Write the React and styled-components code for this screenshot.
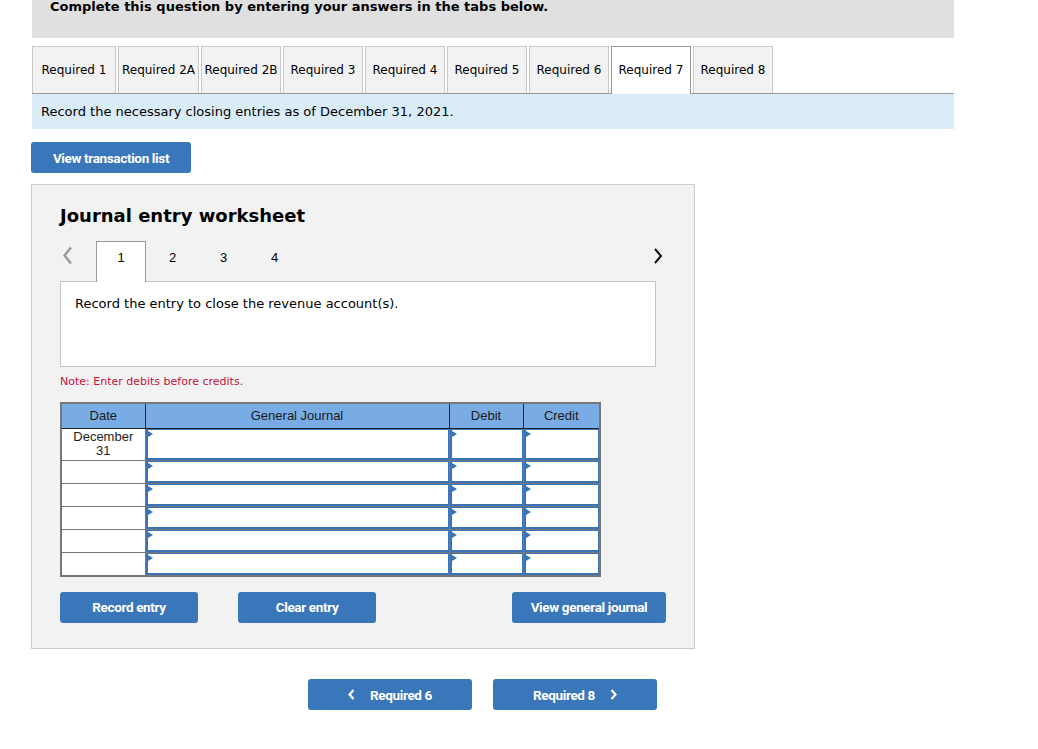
import React from "react";
import styled, { createGlobalStyle } from "styled-components";

const Global = createGlobalStyle`
  html, body { margin: 0; padding: 0; background: #fff; }
  body { font-family: "DejaVu Sans", Verdana, sans-serif; color: #000; }
  * { box-sizing: border-box; }
`;

const Page = styled.div`
  width: 1038px;
  padding-left: 32px;
`;

const Banner = styled.div`
  width: 922px;
  height: 38px;
  background: #e0e0e0;
  padding: 0 18px;
  font-weight: bold;
  font-size: 13px;
  line-height: 14px;
`;

const Tabs = styled.div`
  width: 922px;
  margin-top: 8px;
  display: flex;
  gap: 2px;
  border-bottom: 1px solid #999;
`;

const Tab = styled.div`
  width: ${(p) => p.$w}px;
  display: flex;
  align-items: center;
  justify-content: center;
  white-space: nowrap;
  font-size: 12px;
  background: ${(p) => (p.$active ? "#fff" : "#f2f2f2")};
  border: 1px solid ${(p) => (p.$active ? "#999" : "#c9c9c9")};
  border-bottom: none;
  margin-bottom: ${(p) => (p.$active ? "-1px" : "0")};
  height: ${(p) => (p.$active ? "48px" : "47px")};
  padding-bottom: ${(p) => (p.$active ? "1px" : "0")};
`;

const Info = styled.div`
  width: 922px;
  height: 35px;
  background: #dbecf9;
  padding-left: 9px;
  display: flex;
  align-items: center;
  font-size: 13px;
`;

const Button = styled.button`
  border: none;
  border-radius: 3px;
  background: #3a76ba;
  color: #fff;
  font-family: Roboto, "Liberation Sans", Arial, sans-serif;
  font-weight: bold;
  font-size: 13.5px;
  letter-spacing: -0.35px;
  height: 31px;
  width: ${(p) => p.$w}px;
  padding: 0;
  display: flex;
  align-items: center;
  justify-content: center;
  gap: 15px;
  cursor: pointer;
`;

const TopButton = styled(Button)`
  margin-top: 13px;
  margin-left: -1px;
`;

const Panel = styled.div`
  width: 664px;
  height: 465px;
  margin-top: 11px;
  margin-left: -1px;
  background: #f2f2f2;
  border: 1px solid #ccc;
  padding: 19px 28px 0 28px;
`;

const Title = styled.h2`
  margin: 0;
  font-size: 18px;
  font-weight: bold;
  line-height: 24px;
`;

const Pager = styled.div`
  margin-top: 12px;
  width: 603px;
  display: flex;
  align-items: flex-end;
  position: relative;
  z-index: 1;
`;

const Chevron = styled.div`
  width: 36px;
  height: 41px;
  display: flex;
  align-items: center;
  justify-content: ${(p) => (p.$right ? "flex-end" : "flex-start")};
  padding: ${(p) => (p.$right ? "0 0 10px 0" : "0 0 10px 2px")};
  margin-left: ${(p) => (p.$right ? "auto" : "0")};
`;

const PageNum = styled.div`
  width: ${(p) => (p.$active ? 50 : 51)}px;
  height: 41px;
  margin-bottom: -1px;
  display: flex;
  justify-content: center;
  padding-top: 8px;
  font-family: "Liberation Sans", Arial, sans-serif;
  font-size: 13px;
  background: ${(p) => (p.$active ? "#fff" : "transparent")};
  border: 1px solid ${(p) => (p.$active ? "#999" : "transparent")};
  border-bottom: none;
  margin-right: ${(p) => (p.$active ? 1 : 0)}px;
`;

const Prompt = styled.div`
  width: 596px;
  height: 86px;
  background: #fff;
  border: 1px solid #c4c4c4;
  padding: 14px 14px;
  font-size: 13px;
`;

const Note = styled.div`
  margin-top: 8px;
  font-size: 11px;
  color: #c2123e;
`;

const Table = styled.table`
  margin-top: 14px;
  border-collapse: collapse;
  border: 2px solid #777;
  font-family: "Liberation Sans", Arial, sans-serif;
  font-size: 13px;
  table-layout: fixed;
  width: 539px;
`;

const Th = styled.th`
  background: #79ace4;
  color: #1a1a1a;
  font-weight: normal;
  height: 25px;
  padding: 0;
  border: 1px solid #777;
  border-bottom: 1px solid #222;
  border-right: 1px solid ${(p) => (p.$last ? "#777" : "#222")};
  width: ${(p) => p.$w}px;
`;

const Tr = styled.tr`
  height: ${(p) => (p.$tall ? 32 : 23)}px;
`;

const DateCell = styled.td`
  background: #fff;
  border: 1px solid #777;
  text-align: center;
  vertical-align: top;
  padding: 1px 0 0 0;
  line-height: 14px;
  color: #222;
`;

const InputCell = styled.td`
  border: 1px solid #777;
  padding: 0;
`;

const Field = styled.div`
  position: relative;
  height: ${(p) => (p.$tall ? 31 : 22)}px;
  background: #fff;
  border: 1px solid #3c73b6;
  border-width: 1px 1px 2px 2px;
  &::before {
    content: "";
    position: absolute;
    left: 0;
    top: 1px;
    border-left: 5px solid #3c73b6;
    border-top: 3px solid transparent;
    border-bottom: 3px solid transparent;
  }
`;

const Actions = styled.div`
  margin-top: 15px;
  width: 606px;
  display: flex;
  gap: 40px;
`;

const Spacer = styled.div`
  flex: 1;
`;

const Nav = styled.div`
  margin-top: 30px;
  margin-left: 276px;
  display: flex;
  gap: 21px;
`;

const ChevLeft = () => (
  <svg width="11" height="19" viewBox="0 0 11 19">
    <path d="M9 1.5 L2.5 9.5 L9 17.5" fill="none" stroke="#999" strokeWidth="2.4" />
  </svg>
);
const ChevRight = () => (
  <svg width="10" height="18" viewBox="0 0 10 18">
    <path d="M2 2 L8 9 L2 16" fill="none" stroke="#111" strokeWidth="2" />
  </svg>
);
const SmallChev = ({ dir }) => (
  <svg width="7" height="11" viewBox="0 0 7 11">
    <path
      d={dir === "left" ? "M5.5 1 L1.5 5.5 L5.5 10" : "M1.5 1 L5.5 5.5 L1.5 10"}
      fill="none"
      stroke="#fff"
      strokeWidth="2.2"
    />
  </svg>
);

const tabs = [
  ["Required 1", 84],
  ["Required 2A", 81],
  ["Required 2B", 80],
  ["Required 3", 80],
  ["Required 4", 80],
  ["Required 5", 80],
  ["Required 6", 80],
  ["Required 7", 80],
  ["Required 8", 80],
];

export default function App() {
  const rows = [0, 1, 2, 3, 4, 5];
  return (
    <Page>
      <Global />
      <Banner>Complete this question by entering your answers in the tabs below.</Banner>
      <Tabs>
        {tabs.map(([t, w]) => (
          <Tab key={t} $w={w} $active={t === "Required 7"}>
            {t}
          </Tab>
        ))}
      </Tabs>
      <Info>Record the necessary closing entries as of December 31, 2021.</Info>
      <TopButton $w={160}>View transaction list</TopButton>
      <Panel>
        <Title>Journal entry worksheet</Title>
        <Pager>
          <Chevron>
            <ChevLeft />
          </Chevron>
          <PageNum $active>1</PageNum>
          <PageNum>2</PageNum>
          <PageNum>3</PageNum>
          <PageNum>4</PageNum>
          <Chevron $right>
            <ChevRight />
          </Chevron>
        </Pager>
        <Prompt>Record the entry to close the revenue account(s).</Prompt>
        <Note>Note: Enter debits before credits.</Note>
        <Table>
          <thead>
            <tr>
              <Th $w={84}>Date</Th>
              <Th $w={304}>General Journal</Th>
              <Th $w={74}>Debit</Th>
              <Th $w={77} $last>Credit</Th>
            </tr>
          </thead>
          <tbody>
            {rows.map((r) => (
              <Tr key={r} $tall={r === 0}>
                <DateCell>
                  {r === 0 ? (
                    <>
                      December
                      <br />
                      31
                    </>
                  ) : null}
                </DateCell>
                <InputCell>
                  <Field $tall={r === 0} />
                </InputCell>
                <InputCell>
                  <Field $tall={r === 0} />
                </InputCell>
                <InputCell>
                  <Field $tall={r === 0} />
                </InputCell>
              </Tr>
            ))}
          </tbody>
        </Table>
        <Actions>
          <Button $w={138}>Record entry</Button>
          <Button $w={138}>Clear entry</Button>
          <Spacer />
          <Button $w={154}>View general journal</Button>
        </Actions>
      </Panel>
      <Nav>
        <Button $w={164}>
          <SmallChev dir="left" />
          <span>Required 6</span>
        </Button>
        <Button $w={164}>
          <span>Required 8</span>
          <SmallChev dir="right" />
        </Button>
      </Nav>
    </Page>
  );
}
